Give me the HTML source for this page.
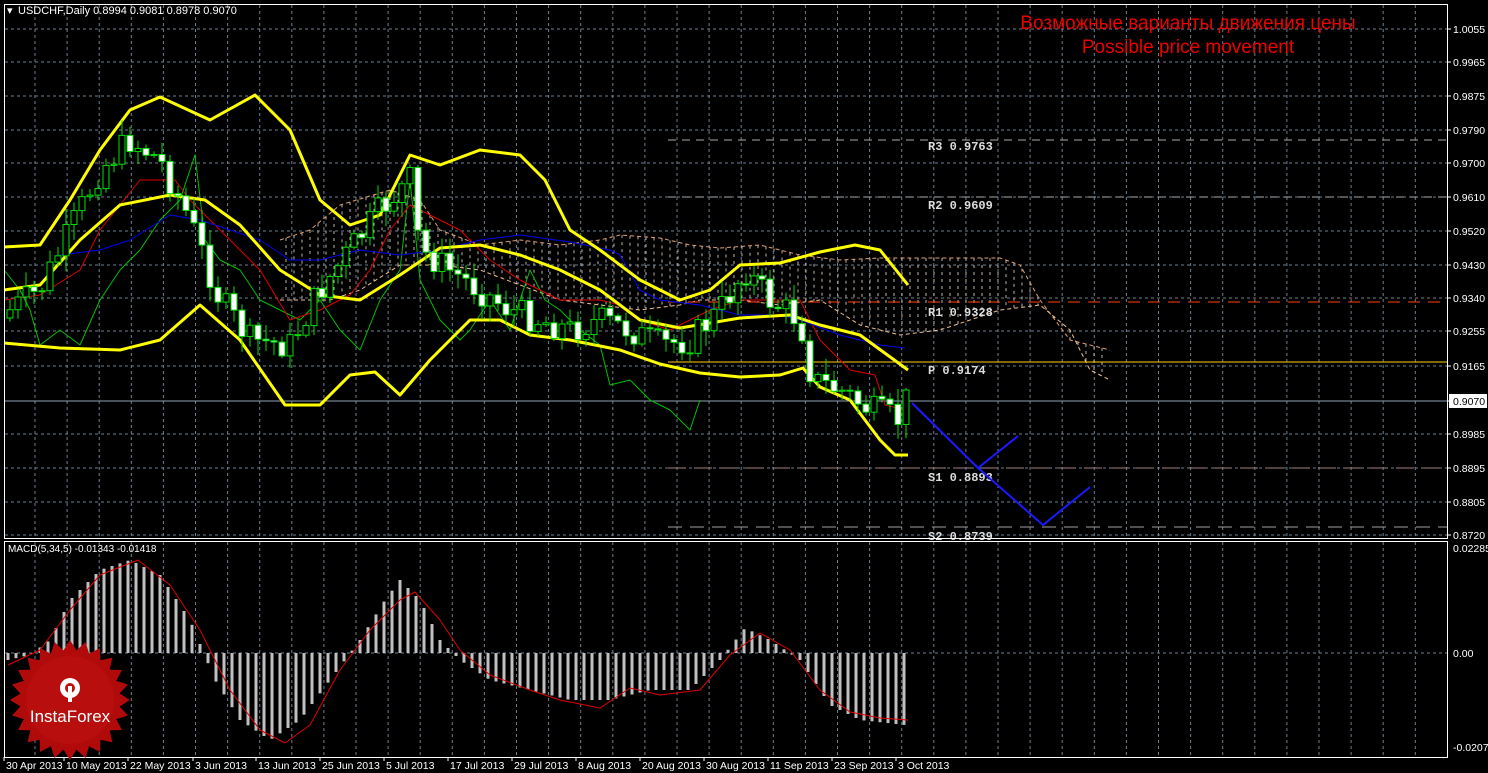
<!DOCTYPE html><html><head><meta charset="utf-8"><style>
html,body{margin:0;padding:0;background:#000;width:1488px;height:773px;overflow:hidden}
svg{display:block}
text{font-family:"Liberation Sans",sans-serif}
text.m{font-family:"Liberation Mono",monospace}
</style></head><body>
<svg id="s" width="1488" height="773" xmlns="http://www.w3.org/2000/svg">
<rect width="1488" height="773" fill="#000"/>
<g id="grid"></g>
<g id="cloud"></g>
<g id="lv"></g>
<g id="ind"></g>
<g id="cand"></g>
<g id="macd"></g>
<rect x="4.5" y="4.5" width="1443" height="534" fill="none" stroke="#fff"/>
<rect x="4.5" y="541.5" width="1443" height="216" fill="none" stroke="#fff"/>
<text x="7" y="14" fill="#fff" font-size="11">&#x25BE;</text>
<text x="18" y="14" fill="#fff" font-size="11">USDCHF,Daily  0.8994 0.9081 0.8978 0.9070</text>
<text x="8" y="552" fill="#fff" font-size="10">MACD(5,34,5) -0.01343 -0.01418</text>
<text x="1188" y="29" fill="#e00" font-size="19" text-anchor="middle">Возможные варианты движения цены</text>
<text x="1188" y="53" fill="#e00" font-size="19" text-anchor="middle">Possible price movement</text>
<g id="axis" font-size="10.5" fill="#fff"></g>
<g transform="translate(70,700)">
<polygon id="star" fill="#b00a0a"/>
<circle r="44" fill="#c01010" opacity=".6"/>
<g fill="#fff" transform="translate(0,-12)">
<circle r="10"/><circle r="5" fill="#c01010"/>
<rect x="-2" y="-2" width="4" height="16"/>
</g>
<text x="0" y="22" fill="#fff" font-size="17" text-anchor="middle">InstaForex</text>
</g>
</svg>
<script>
const NS="http://www.w3.org/2000/svg";
function el(p,t,a,txt){const e=document.createElementNS(NS,t);for(const k in a)e.setAttribute(k,a[k]);if(txt!=null)e.textContent=txt;document.getElementById(p).appendChild(e);return e;}
function pl(p,pts,c,w,extra){const a={points:pts.map(q=>q.join(',')).join(' '),fill:'none',stroke:c,'stroke-width':w,'stroke-linejoin':'round'};Object.assign(a,extra||{});el(p,'polyline',a);}
function interp(kp,x){for(let i=0;i<kp.length-1;i++){if(x>=kp[i][0]&&x<=kp[i+1][0]){const t=(x-kp[i][0])/(kp[i+1][0]-kp[i][0]);return kp[i][1]+t*(kp[i+1][1]-kp[i][1]);}}return kp[kp.length-1][1];}
for(let x=35;x<1447;x+=32.1)el('grid','line',{x1:x,y1:5,x2:x,y2:538,stroke:'#6e7f90','stroke-dasharray':'3,3'});
for(let x=35;x<1447;x+=32.1)el('grid','line',{x1:x,y1:542,x2:x,y2:757,stroke:'#6e7f90','stroke-dasharray':'3,3'});
const ys=[29,62,96,130,163,197,231,265,298,331,366,401,434,468,502,535];
const lb=['1.0055','0.9965','0.9875','0.9790','0.9700','0.9610','0.9520','0.9430','0.9340','0.9255','0.9165','','0.8985','0.8895','0.8805','0.8720'];
ys.forEach((y,i)=>{if(i!=11)el('grid','line',{x1:5,y1:y,x2:1447,y2:y,stroke:'#6e7f90','stroke-dasharray':'3,3'});if(lb[i])el('axis','text',{x:1453,y:y+4},lb[i]);el('axis','line',{x1:1447,y1:y,x2:1451,y2:y,stroke:'#fff'});});
el('grid','line',{x1:5,y1:653,x2:1447,y2:653,stroke:'#6e7f90','stroke-dasharray':'3,3'});
el('axis','text',{x:1453,y:552},'0.02285');el('axis','text',{x:1453,y:657},'0.00');el('axis','text',{x:1453,y:751},'-0.02075');
el('axis','rect',{x:1449,y:394,width:38,height:14,fill:'#fff'});
el('axis','text',{x:1453,y:405,fill:'#000'},'0.9070');
const dates=[[6,'30 Apr 2013'],[66,'10 May 2013'],[130,'22 May 2013'],[195,'3 Jun 2013'],[258,'13 Jun 2013'],[322,'25 Jun 2013'],[386,'5 Jul 2013'],[450,'17 Jul 2013'],[514,'29 Jul 2013'],[578,'8 Aug 2013'],[642,'20 Aug 2013'],[706,'30 Aug 2013'],[770,'11 Sep 2013'],[834,'23 Sep 2013'],[898,'3 Oct 2013']];
dates.forEach(d=>{el('axis','text',{x:d[0],y:769},d[1]);el('axis','line',{x1:d[0]-2,y1:757,x2:d[0]-2,y2:761,stroke:'#fff'});});
const ctop=[[280,240],[310,230],[340,205],[390,190],[420,200],[440,230],[480,245],[520,240],[560,245],[600,240],[620,235],[660,238],[690,245],[720,248],[760,245],[800,255],[840,260],[880,258],[1000,258],[1020,265],[1040,300],[1070,340],[1110,350]];
const cbot=[[280,300],[330,300],[360,290],[400,265],[440,265],[480,270],[520,285],[560,300],[600,305],[640,310],[680,305],[700,300],[740,300],[780,305],[820,300],[860,325],[900,335],[940,330],[1000,310],[1040,305],[1070,330],[1090,370],[1110,380]];
for(let x=286;x<1110;x+=8){const a=interp(ctop,x),b=interp(cbot,x);el('cloud','line',{x1:x,y1:Math.min(a,b),x2:x,y2:Math.max(a,b),stroke:'#bfb2a5','stroke-width':1,'stroke-dasharray':'3,4'});}
pl('cloud',ctop,'#e0a070',1,{'stroke-dasharray':'4,3'});pl('cloud',cbot,'#f0c090',1,{'stroke-dasharray':'4,3'});
const L=[[140,'#aaaaaa','8,6','R3 0.9763',150],[197,'#aaaaaa','8,6','R2 0.9609',209],[302,'#ff4010','12,8','R1 0.9328',316],[468,'#a08080','18,8','S1 0.8893',481],[527,'#a0a0a0','14,8','S2 0.8739',540]];
L.forEach(l=>{el('lv','line',{x1:668,y1:l[0],x2:1447,y2:l[0],stroke:l[1],'stroke-dasharray':l[2]});el('lv','text',{x:928,y:l[4],fill:'#ddd','font-size':12,'font-weight':'bold',class:'m'},l[3]);});
el('lv','line',{x1:668,y1:362,x2:1447,y2:362,stroke:'#ffd000'});
el('lv','text',{x:928,y:374,fill:'#ddd','font-size':12,'font-weight':'bold',class:'m','xml:space':'preserve'},'P  0.9174');
el('lv','line',{x1:5,y1:401,x2:1447,y2:401,stroke:'#8fa0b8'});
const green=[[4,270],[20,290],[30,310],[40,345],[60,330],[80,345],[100,300],[120,270],[140,250],[160,220],[180,200],[195,155],[205,240],[220,260],[240,270],[260,300],[280,310],[300,320],[320,300],[340,330],[360,350],[380,300],[400,270],[410,180],[420,280],[440,320],[460,340],[470,330],[490,300],[510,330],[530,270],[545,300],[560,310],[580,330],[600,345],[610,385],[630,380],[650,400],[670,410],[690,430],[700,400]];
pl('ind',green,'#00c000',1);
const red=[[4,300],[40,295],[80,270],[100,230],[120,205],[140,180],[160,180],[175,180],[190,200],[210,220],[230,240],[260,270],[290,320],[320,310],[350,295],[370,270],[390,230],[410,205],[430,215],[460,230],[490,260],[520,280],[540,290],[560,300],[600,300],[620,305],[640,320],[670,330],[690,320],[710,310],[740,300],[770,300],[800,300],[820,340],[850,370],[875,375],[885,405],[905,410]];
pl('ind',red,'#e00000',1);
const blue=[[60,255],[100,250],[130,240],[170,215],[200,220],[230,230],[260,240],[290,260],[320,260],[360,250],[400,255],[440,250],[480,240],[520,235],[570,242],[610,250],[620,255],[640,290],[660,300],[700,305],[740,315],[780,315],[800,320],[840,335],[880,345],[905,348]];
pl('ind',blue,'#0000f0',1);
const up=[[4,247],[40,245],[70,200],[100,150],[130,110],[160,97],[210,120],[255,95],[290,130],[320,200],[350,225],[380,215],[410,155],[440,165],[480,150],[520,155],[545,180],[570,230],[600,250],[640,280],[680,300],[710,290],[740,265],[780,263],[820,252],[855,245],[880,250],[908,285]];
const mid=[[4,290],[40,285],[80,240],[120,205],[170,195],[205,200],[240,225],[280,270],[320,295],[360,300],[400,275],[440,248],[480,245],[520,255],[560,270],[600,290],[640,320],[680,328],[740,318],[790,315],[820,325],[860,335],[908,370]];
const lo=[[4,343],[60,348],[120,350],[160,340],[200,305],[240,340],[285,405],[320,405],[350,375],[375,372],[400,395],[430,360],[470,320],[500,320],[530,335],[570,340],[620,350],[660,364],[700,373],[740,377],[780,375],[803,368],[820,387],[850,400],[880,440],[895,455],[908,455]];
[up,mid,lo].forEach(p=>pl('ind',p,'#ffff00',3));
pl('ind',[[912,403],[978,468],[1018,436]],'#1a1aff',2);
pl('ind',[[978,468],[1043,525],[1090,487]],'#1a1aff',2);
const cl=[[10,310],[40,290],[70,230],[100,170],[130,140],[160,160],[190,220],[220,300],[250,340],[290,345],[320,290],[350,250],[380,210],[410,180],[420,250],[450,270],[480,290],[510,310],[540,320],[570,330],[600,320],[630,330],[660,345],[690,340],[720,310],[745,270],[770,300],[800,320],[812,380],[840,390],[870,410],[900,420],[905,400]];
let prev=interp(cl,10)+8;let seed=7;function rnd(){seed=(seed*9301+49297)%233280;return seed/233280;}
for(let x=10;x<=906;x+=8){let c=interp(cl,x)+(rnd()-.5)*30;let o=prev;prev=c;const top=Math.min(o,c),bot=Math.max(o,c);const hi=top-rnd()*14-2,lw=bot+rnd()*14+2;
el('cand','line',{x1:x,y1:hi,x2:x,y2:lw,stroke:'#00e000'});
el('cand','rect',{x:x-3,y:top,width:6,height:Math.max(bot-top,1),fill:c>o?'#fff':'#000',stroke:'#00e000'});}
const mk=[[8,660],[30,655],[50,640],[70,600],[100,570],[130,560],[160,575],[190,620],[215,680],[240,720],[270,740],[300,720],[330,680],[360,640],[385,600],[400,580],[420,600],[440,640],[460,660],[490,680],[530,690],[570,700],[610,700],[650,690],[690,690],[720,660],[745,628],[770,640],[800,660],[830,705],[860,720],[905,725]];
for(let x=8;x<=906;x+=8){let v=interp(mk,x);el('macd','rect',{x:x-1.5,y:Math.min(v,653),width:3,height:Math.abs(v-653),fill:'#c0c0c0'});}
const sig=[[8,665],[40,650],[70,610],[100,575],[138,560],[170,585],[200,630],[230,690],[260,730],[285,743],[310,725],[340,670],[370,630],[400,600],[415,592],[440,620],[460,650],[490,675],[530,690],[560,700],[600,708],[630,688],[660,695],[700,690],[730,655],[760,633],[790,650],[820,690],[850,712],[880,718],[908,720]];
pl('macd',sig,'#e00000',1);
let pts=[];for(let i=0;i<48;i++){const r=i%2?50:60;const a=i*Math.PI/24;pts.push((r*Math.cos(a)).toFixed(1)+','+(r*Math.sin(a)).toFixed(1));}
document.getElementById('star').setAttribute('points',pts.join(' '));
</script>
</body></html>
